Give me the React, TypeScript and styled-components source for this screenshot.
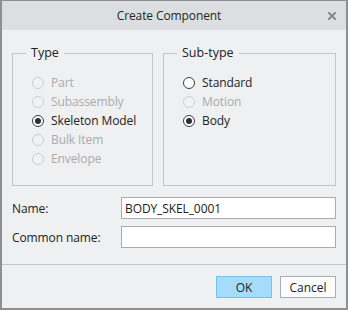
import React from "react";
import styled, { createGlobalStyle } from "styled-components";

const Global = createGlobalStyle`
  html, body { margin: 0; padding: 0; background: #ffffff; }
  * { box-sizing: border-box; }
`;

const Window = styled.div`
  width: 348px;
  height: 310px;
  display: flex;
  flex-direction: column;
  background: #eef0f2;
  border-style: solid;
  border-color: #8f8f8f;
  border-width: 1px 2px 2px 2px;
  font-family: "Open Sans", "Noto Sans", "Liberation Sans", sans-serif;
  font-size: 12px;
  color: #222222;
`;

const TitleBar = styled.div`
  height: 29px;
  flex: none;
  display: grid;
  grid-template-columns: 1fr auto 1fr;
  align-items: center;
  background: #dcdfe1;
  padding-right: 10px;
`;

const Title = styled.div`
  grid-column: 2;
  font-size: 12px;
  color: #262626;
  letter-spacing: -0.1px;
`;

const CloseButton = styled.div`
  grid-column: 3;
  justify-self: end;
  width: 8px;
  height: 8px;
  display: flex;
`;

const Body = styled.div`
  flex: 1;
  display: flex;
  flex-direction: column;
  padding-top: 15px;
`;

const Groups = styled.div`
  display: grid;
  grid-template-columns: 141px 1fr;
  column-gap: 10px;
  padding: 0 10px;
`;

const Group = styled.fieldset`
  margin: 0;
  padding: 12px 0 0 19px;
  min-inline-size: 0;
  height: 141px;
  border: 1px solid #c3c6c9;
  display: flex;
  flex-direction: column;
`;

const Legend = styled.legend`
  margin-left: -6px;
  padding: 0 5px;
  font-size: 12.5px;
  line-height: 16px;
  color: #222222;
`;

const RadioRow = styled.div<{ $disabled?: boolean }>`
  height: 19px;
  display: flex;
  align-items: center;
  gap: 7px;
  color: ${(p) => (p.$disabled ? "#ababab" : "#222222")};
  letter-spacing: -0.1px;
`;

const RadioCircle = styled.span<{ $disabled?: boolean; $checked?: boolean }>`
  width: 12px;
  height: 12px;
  border-radius: 50%;
  flex: none;
  display: flex;
  align-items: center;
  justify-content: center;
  border: 1px solid ${(p) => (p.$disabled ? "#cbcdcf" : "#3c3c3c")};
  background: ${(p) => (p.$disabled ? "#f1f2f3" : "#ffffff")};
  &::after {
    content: "";
    width: 6px;
    height: 6px;
    border-radius: 50%;
    background: #2e2e2e;
    display: ${(p) => (p.$checked ? "block" : "none")};
  }
`;

const Form = styled.div`
  margin-top: 11px;
  padding: 0 10px;
  display: grid;
  grid-template-columns: 109px 1fr;
  row-gap: 7px;
  align-items: center;
`;

const Label = styled.label`
  color: #222222;
  letter-spacing: -0.1px;
`;

const TextInput = styled.div`
  height: 22px;
  background: #ffffff;
  border: 1px solid #ababab;
  display: flex;
  align-items: center;
  padding-left: 3px;
  color: #222222;
  letter-spacing: -0.1px;
`;

const Separator = styled.div`
  margin-top: 16px;
  height: 1px;
  background: #c3c6c9;
`;

const Footer = styled.div`
  display: flex;
  justify-content: flex-end;
  gap: 8px;
  padding: 11px 10px 10px;
`;

const Button = styled.div<{ $primary?: boolean }>`
  width: 56px;
  height: 22px;
  display: flex;
  align-items: center;
  justify-content: center;
  background: ${(p) => (p.$primary ? "#a6dcfb" : "#fcfcfc")};
  border: 1px solid ${(p) => (p.$primary ? "#72c2ee" : "#adadad")};
  color: #222222;
`;

type RadioItem = { label: string; disabled?: boolean; checked?: boolean };

const typeItems: RadioItem[] = [
  { label: "Part", disabled: true },
  { label: "Subassembly", disabled: true },
  { label: "Skeleton Model", checked: true },
  { label: "Bulk Item", disabled: true },
  { label: "Envelope", disabled: true },
];

const subTypeItems: RadioItem[] = [
  { label: "Standard" },
  { label: "Motion", disabled: true },
  { label: "Body", checked: true },
];

const RadioList = ({ items }: { items: RadioItem[] }) => (
  <>
    {items.map((it) => (
      <RadioRow key={it.label} $disabled={it.disabled}>
        <RadioCircle $disabled={it.disabled} $checked={it.checked} />
        {it.label}
      </RadioRow>
    ))}
  </>
);

export default function App() {
  return (
    <>
      <Global />
      <Window>
        <TitleBar>
          <Title>Create Component</Title>
          <CloseButton>
            <svg width="8" height="8" viewBox="0 0 8 8">
              <path d="M1 1 L7 7 M7 1 L1 7" stroke="#8a8a8a" strokeWidth="2" strokeLinecap="square" />
            </svg>
          </CloseButton>
        </TitleBar>
        <Body>
          <Groups>
            <Group>
              <Legend>Type</Legend>
              <RadioList items={typeItems} />
            </Group>
            <Group>
              <Legend>Sub-type</Legend>
              <RadioList items={subTypeItems} />
            </Group>
          </Groups>
          <Form>
            <Label>Name:</Label>
            <TextInput>BODY_SKEL_0001</TextInput>
            <Label>Common name:</Label>
            <TextInput />
          </Form>
          <Separator />
          <Footer>
            <Button $primary>OK</Button>
            <Button>Cancel</Button>
          </Footer>
        </Body>
      </Window>
    </>
  );
}
